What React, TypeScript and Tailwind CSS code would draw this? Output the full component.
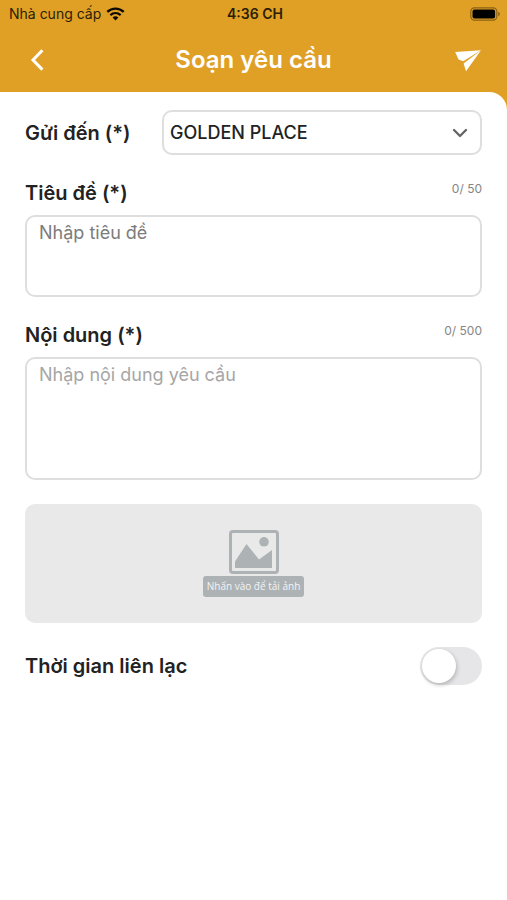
import { useState } from "react";

function WifiIcon() {
  return (
    <svg viewBox="0 0 20 15" className="h-[14px] w-[19px]" fill="none" stroke="#0d0a02" aria-hidden="true">
      <path d="M1.2 5.2C6.2.6 13.8.6 18.8 5.2" strokeWidth="2.5" />
      <path d="M4.5 8.7c3.2-2.9 7.8-2.9 11 0" strokeWidth="2.4" />
      <path d="M6.9 11.2c1.8-1.6 4.4-1.6 6.2 0L10 14.4z" fill="#0d0a02" stroke="none" />
    </svg>
  );
}

function BatteryIcon() {
  return (
    <svg viewBox="0 0 31 14" className="h-[14px] w-[31px]" aria-hidden="true">
      <rect x="0.8" y="0.8" width="26" height="12.4" rx="3.6" fill="none" stroke="#8a6115" strokeWidth="1.2" />
      <rect x="2.5" y="2.5" width="22.6" height="9" rx="2" fill="#000" />
      <path d="M28.2 4.8c2.2.8 2.2 3.6 0 4.4z" fill="#8a6115" />
    </svg>
  );
}

function StatusBar() {
  return (
    <div className="grid h-7 grid-cols-[1fr_auto_1fr] items-center pr-[6px] pl-[9px] text-sm text-[#2a1e05]">
      <div className="flex items-center gap-[5px]">
        <span>Nhà cung cấp</span>
        <WifiIcon />
      </div>
      <span className="font-semibold">4:36 CH</span>
      <div className="flex justify-end">
        <BatteryIcon />
      </div>
    </div>
  );
}

function TitleBar() {
  return (
    <div className="flex h-16 items-center justify-between px-[25px] text-white">
      <button type="button" aria-label="Quay lại" className="flex h-10 w-7 items-center justify-start pl-1">
        <svg viewBox="0 0 16 24" className="h-6 w-4" fill="none" stroke="currentColor" strokeWidth="3" aria-hidden="true">
          <path d="M13.4 2.2 4 12l9.4 9.6" />
        </svg>
      </button>
      <h1 className="text-2xl font-semibold">Soạn yêu cầu</h1>
      <button type="button" aria-label="Gửi" className="flex h-10 w-7 items-center justify-end">
        <svg viewBox="0 0 28 24" className="h-6 w-7" fill="currentColor" aria-hidden="true">
          <path d="M1.2 4 27 2.2 9.2 13.2 4.6 11.6z" />
          <path d="M27 2.2 12 23.2 9.6 15.4z" />
        </svg>
      </button>
    </div>
  );
}

interface TextFieldProps {
  id: string;
  label: string;
  placeholder: string;
  max: number;
  boxClass: string;
}

function TextField({ id, label, placeholder, max, boxClass }: TextFieldProps) {
  const [value, setValue] = useState("");
  return (
    <div className="flex flex-col gap-2">
      <div className="flex h-7 justify-between">
        <label htmlFor={id} className="text-xl leading-7 font-semibold">
          {label}
        </label>
        <span className="text-xs leading-5 text-[#858585]">
          {value.length}/ {max}
        </span>
      </div>
      <textarea
        id={id}
        value={value}
        maxLength={max}
        onChange={(e) => setValue(e.target.value)}
        placeholder={placeholder}
        className={`block w-full resize-none rounded-[10px] border-2 border-[#dedede] px-3 py-1 text-lg leading-6 outline-none ${boxClass}`}
      />
    </div>
  );
}

export default function App() {
  const [contact, setContact] = useState(false);
  return (
    <div className="min-h-screen bg-[#e0a026] font-['Inter','Liberation_Sans',sans-serif] text-[#222222]">
      <header>
        <StatusBar />
        <TitleBar />
      </header>
      <main className="min-h-[calc(100vh-92px)] rounded-tr-[18px] bg-white px-[25px] pt-[18px]">
        <form className="flex flex-col">
          <div className="flex items-center">
            <label htmlFor="recipient" className="w-[137px] shrink-0 text-xl font-semibold">
              Gửi đến (*)
            </label>
            <div className="grid flex-1 items-center">
              <select
                id="recipient"
                className="col-start-1 row-start-1 h-[45px] w-full appearance-none rounded-[10px] border-2 border-[#dedede] bg-white px-[6px] text-lg font-medium outline-none"
              >
                <option>GOLDEN PLACE</option>
              </select>
              <svg
                viewBox="0 0 16 10"
                className="pointer-events-none col-start-1 row-start-1 mr-[14px] h-[10px] w-4 justify-self-end"
                fill="none"
                stroke="#666666"
                strokeWidth="2.4"
                strokeLinecap="round"
                strokeLinejoin="round"
                aria-hidden="true"
              >
                <path d="m2 2 6 6 6-6" />
              </svg>
            </div>
          </div>

          <div className="mt-6 flex flex-col gap-6">
            <TextField
              id="title"
              label="Tiêu đề (*)"
              placeholder="Nhập tiêu đề"
              max={50}
              boxClass="h-[82px] placeholder:text-[#7c7c7c]"
            />
            <TextField
              id="content"
              label="Nội dung (*)"
              placeholder="Nhập nội dung yêu cầu"
              max={500}
              boxClass="h-[123px] placeholder:text-[#a6a6a6]"
            />
            <button
              type="button"
              className="flex h-[119px] w-full flex-col items-center justify-center gap-[2px] rounded-[10px] bg-[#e9e9e9]"
            >
              <svg viewBox="0 0 50 44" className="h-11 w-[50px]" aria-hidden="true">
                <rect x="1.5" y="1.5" width="47" height="41" rx="2.5" fill="none" stroke="#adb2b5" strokeWidth="3" />
                <circle cx="35" cy="11.8" r="4.8" fill="#adb2b5" />
                <path d="M6 38V31.500L17.500 14 30 29.500 43 20V38z" fill="#adb2b5" />
              </svg>
              <span className="rounded-[3px] bg-[#adb2b5] px-1 font-['Open_Sans',sans-serif] text-[10px] leading-[21px] text-[#f4f4f4]">
                Nhấn vào để tải ảnh
              </span>
            </button>
          </div>

          <div className="mt-6 flex items-center justify-between">
            <label htmlFor="contact-time" className="text-xl font-semibold">
              Thời gian liên lạc
            </label>
            <input
              id="contact-time"
              type="checkbox"
              role="switch"
              checked={contact}
              onChange={(e) => setContact(e.target.checked)}
              className="flex h-[38px] w-[62px] appearance-none items-center rounded-full bg-[#e6e6e8] px-[2px] before:block before:size-[34px] before:rounded-full before:bg-white before:shadow-[1px_2px_4px_rgba(0,0,0,0.22)] before:content-[''] checked:justify-end checked:bg-[#e0a026]"
            />
          </div>
        </form>
      </main>
    </div>
  );
}
